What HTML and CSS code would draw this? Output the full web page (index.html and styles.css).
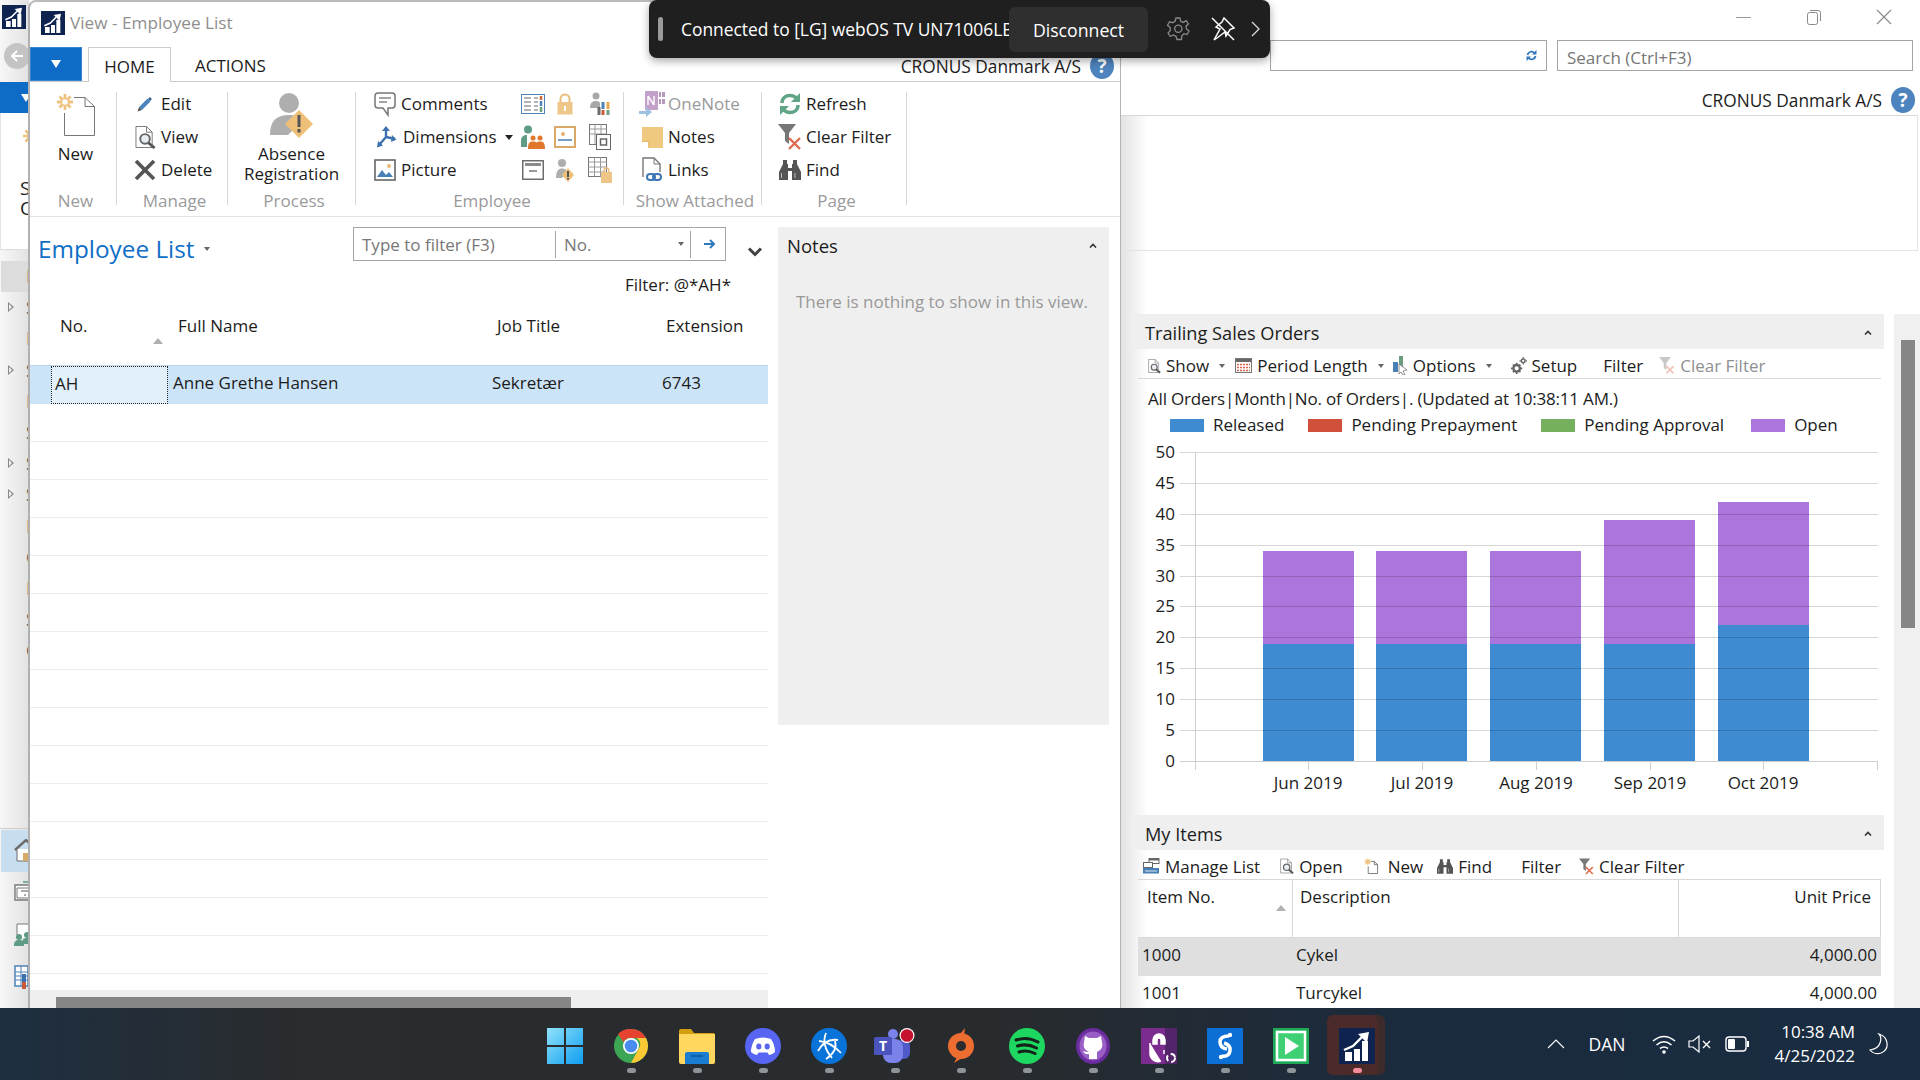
FILE: index.html
```html
<!DOCTYPE html>
<html lang="en">
<head>
    <meta charset="UTF-8">
    <title>View - Employee List</title>
    <link rel="stylesheet" href="styles.css">
</head>
<body>
<svg class="defs" width="0" height="0">
    <symbol id="i-sun" viewBox="0 0 18 18"><path d="M9 1V17M1 9H17M3.5 3.5L14.5 14.5M14.5 3.5L3.5 14.5" stroke="#eec27e" stroke-width="2.6"/><circle cx="9" cy="9" r="2.6" fill="#fff"/></symbol>
    <symbol id="i-new" viewBox="0 0 40 44"><path d="M18 4.5H29L38.5 13.500V42.500H8.500V20" fill="#fff" stroke="#777"/><path d="M29 4.500V13.500H38.500" fill="none" stroke="#777"/><path d="M9 1V17M1 9H17M3.500 3.500L14.500 14.500M14.500 3.500L3.500 14.500" stroke="#eec27e" stroke-width="2.800"/><circle cx="9" cy="9" r="2.800" fill="#fff"/></symbol>
    <symbol id="i-newsm" viewBox="0 0 16 18"><path d="M7 3.500H11L14.500 7V16.500H4.500V9" fill="#fff" stroke="#777"/><path d="M11 3.500V7H14.500" fill="none" stroke="#777"/><path d="M4 0.500V7.500M0.500 4H7.500M1.500 1.500L6.500 6.500M6.500 1.500L1.500 6.500" stroke="#eec27e" stroke-width="1.200"/></symbol>
    <symbol id="i-edit" viewBox="0 0 16 16"><path d="M3.500 12.500L12 4" stroke="#4b83bd" stroke-width="4"/><path d="M12 2L14 4" stroke="#2f5f93" stroke-width="2.500"/><path d="M0.500 15.500L2 11L5 14Z" fill="#555"/></symbol>
    <symbol id="i-view" viewBox="0 0 22 24"><path d="M1 1H12L18 7V23H1Z" fill="#fff" stroke="#777"/><path d="M12 1V7H18" fill="none" stroke="#777"/><circle cx="10.500" cy="14" r="5" fill="#e8eef4" stroke="#666" stroke-width="2"/><path d="M14 18L20.500 23.500" stroke="#555" stroke-width="3"/></symbol>
    <symbol id="i-x" viewBox="0 0 22 20"><path d="M2 1L20 19M20 1L2 19" stroke="#555" stroke-width="3.600"/></symbol>
    <symbol id="i-person-warn" viewBox="0 0 44 46"><circle cx="19" cy="10" r="10" fill="#aeaeae"/><path d="M0 42C0 28 6 22 19 22C26 22 30 24 32 28L18 42Z" fill="#aeaeae"/><path d="M29 17L43 31L29 45L15 31Z" fill="#eebf77"/><rect x="27.500" y="22" width="3" height="12" fill="#555"/><rect x="27.500" y="36" width="3" height="3.500" fill="#555"/></symbol>
    <symbol id="i-comment" viewBox="0 0 22 25"><path d="M4 1H18Q21 1 21 4V13Q21 16 18 16H14V23L9 16H4Q1 16 1 13V4Q1 1 4 1Z" fill="#fff" stroke="#777" stroke-width="1.500"/><path d="M5 6H17M5 10H13" stroke="#888" stroke-width="1.300"/></symbol>
    <symbol id="i-dims" viewBox="0 0 20 22"><path d="M9 11V2M9 11L2 19M9 11L18 13" stroke="#3c70ae" stroke-width="2.400" fill="none"/><path d="M9 0L13 5H5ZM0 21.500L1 15L6 19.500ZM19.500 13.500L15 9L14 16Z" fill="#3c70ae"/></symbol>
    <symbol id="i-picture" viewBox="0 0 22 22"><rect x="1" y="1" width="20" height="20" fill="#fff" stroke="#666" stroke-width="1.600"/><path d="M3 18L8 11L12 16L15 13L19 18Z" fill="#4a80b8"/><circle cx="15" cy="7" r="2" fill="#e8b878"/></symbol>
    <symbol id="i-book" viewBox="0 0 24 22"><rect x="0.500" y="1.500" width="23" height="19" fill="#fff" stroke="#4f81b5"/><path d="M3 5H10M3 9H10M3 13H10M3 17H10M13 5H17M13 9H17M13 13H17M13 17H17" stroke="#9a9a9a" stroke-width="1.500"/><path d="M20 3V7" stroke="#d06a3c" stroke-width="2.500"/><path d="M20 8V13" stroke="#4f81b5" stroke-width="2.500"/><path d="M20 14V19" stroke="#6aa07e" stroke-width="2.500"/></symbol>
    <symbol id="i-lock" viewBox="0 0 16 22"><path d="M3.500 10V6A4.500 4.500 0 0 1 12.500 6V10" fill="none" stroke="#e9bd7c" stroke-width="2"/><rect x="0.500" y="9" width="15" height="12.500" fill="#eec689"/><rect x="7" y="13" width="2" height="5" fill="#fff"/></symbol>
    <symbol id="i-person-chart" viewBox="0 0 22 24"><circle cx="7" cy="4" r="3.500" fill="#a8a8a8"/><path d="M1 16C1 10 4 9 7 9S11 10 11 12V16Z" fill="#a8a8a8"/><path d="M10 15V23" stroke="#6b6b6b" stroke-width="3"/><path d="M14 10V17" stroke="#4f81b5" stroke-width="3"/><path d="M14 18V23" stroke="#c85a3a" stroke-width="3"/><path d="M19 10V17" stroke="#e9a94f" stroke-width="3"/><path d="M19 18V23" stroke="#6a9f80" stroke-width="3"/></symbol>
    <symbol id="i-people" viewBox="0 0 24 24"><circle cx="7" cy="4.500" r="4" fill="#5e9c85"/><path d="M0 16C0 11 3 10 6 10L6 22H0Z" fill="#5e9c85"/><circle cx="12" cy="13" r="2.500" fill="#e0772b"/><circle cx="19" cy="13" r="2.500" fill="#e0772b"/><path d="M7 24C7 17 9 16.500 12 16.500S17 17 17 24ZM14 24C14 17 16 16.500 19 16.500S24 17 24 24Z" fill="#e0772b"/></symbol>
    <symbol id="i-card" viewBox="0 0 22 22"><rect x="1" y="1" width="20" height="20" fill="#fff" stroke="#d9a868" stroke-width="2"/><circle cx="9" cy="8" r="2" fill="#e3b26e"/><path d="M4 14H18" stroke="#4f81b5" stroke-width="1.500"/></symbol>
    <symbol id="i-table-frame" viewBox="0 0 22 26"><rect x="0.500" y="0.500" width="17" height="20" fill="#fff" stroke="#777"/><path d="M0.500 5H17.500M0.500 10H17.500M6 0.500V20M12 0.500V20" stroke="#999"/><rect x="7.500" y="10.500" width="14" height="15" fill="#fff" stroke="#666"/><rect x="11.500" y="15" width="6" height="6" fill="none" stroke="#666" stroke-width="1.500"/></symbol>
    <symbol id="i-window" viewBox="0 0 22 20"><rect x="0.750" y="0.750" width="20.500" height="18.500" fill="#fff" stroke="#6d6d6d" stroke-width="1.500"/><rect x="3" y="3" width="16" height="3" fill="#8a8a8a"/><path d="M7 11H15" stroke="#777" stroke-width="1.500"/></symbol>
    <symbol id="i-person-warn-sm" viewBox="0 0 20 24"><circle cx="7" cy="5" r="4" fill="#aeaeae"/><path d="M1 20C1 12 4 10.500 7 10.500S12 12 12 14L7 20Z" fill="#aeaeae"/><path d="M13 10L19 17L13 24L7 17Z" fill="#eebf77"/><rect x="12" y="13" width="2" height="6" fill="#555"/><rect x="12" y="20" width="2" height="1.500" fill="#555"/></symbol>
    <symbol id="i-table-lock" viewBox="0 0 25 27"><rect x="0.500" y="0.500" width="18" height="19" fill="#fff" stroke="#777"/><path d="M0.500 5H18.500M0.500 10H18.500M0.500 15H18.500M6.500 0.500V19.500M12.500 0.500V19.500" stroke="#999"/><path d="M16 16V13.500A2.500 2.500 0 0 1 21 13.500V16" fill="none" stroke="#e9bd7c" stroke-width="1.500"/><rect x="13" y="15" width="11" height="11" fill="#eec689"/></symbol>
    <symbol id="i-onenote" viewBox="0 0 26 26"><rect x="6" y="0" width="13" height="19" fill="#c3a0ca"/><path d="M20 1H22V6H20ZM23 1H26V6H23ZM20 8H22V13H20ZM23 8H26V13H23Z" fill="#b59abb"/><path d="M9 5V14M9 5L15 14M15 5V14" stroke="#fff" stroke-width="1.400"/><path d="M0 20H7V16L13 21L7 26V23H0Z" fill="#9ec1e0"/></symbol>
    <symbol id="i-notes" viewBox="0 0 21 21"><path d="M0 0H21V21H7L0 14Z" fill="#efc97f"/><path d="M0 15H6V21Z" fill="#fff"/><path d="M0 14.500H7V21" fill="none" stroke="#e7b866"/></symbol>
    <symbol id="i-links" viewBox="0 0 20 26"><path d="M1 20V1H12L18 7V15" fill="#fff" stroke="#777" stroke-width="1.400"/><path d="M12 1V7H18" fill="none" stroke="#777"/><rect x="5" y="17" width="8" height="6" rx="3" fill="none" stroke="#3f78b5" stroke-width="2"/><rect x="11" y="17" width="8" height="6" rx="3" fill="none" stroke="#3f78b5" stroke-width="2"/></symbol>
    <symbol id="i-refresh" viewBox="0 0 22 24"><path d="M3 11C3 6 7 3.500 11 3.500C14 3.500 16 4.500 17.500 6.500" fill="none" stroke="#5fa585" stroke-width="3.500"/><path d="M21 1V10H12Z" fill="#5fa585"/><path d="M19 13C19 18 15 20.500 11 20.500C8 20.500 6 19.500 4.500 17.500" fill="none" stroke="#5fa585" stroke-width="3.500"/><path d="M1 23V14H10Z" fill="#5fa585"/></symbol>
    <symbol id="i-funnel-x" viewBox="0 0 24 26"><path d="M0 0H18L11 9V20L7 17V9Z" fill="#777"/><path d="M11 14L22 25M22 14L11 25" stroke="#de6a50" stroke-width="2.400"/></symbol>
    <symbol id="i-binoc" viewBox="0 0 22 20"><path d="M4 0H8V4H9V8H13V4H14V0H18V4L22 12V20H13V11H9V20H0V12L4 4Z" fill="#555"/><path d="M2.500 13V18M16 13V18" stroke="#bbb"/></symbol>
    <symbol id="i-calendar" viewBox="0 0 17 15"><rect x="0.500" y="0.500" width="16" height="14" fill="#fff" stroke="#777"/><rect x="1" y="1" width="15" height="3" fill="#666"/><path d="M2 6.500H15M2 9.500H15M2 12.500H15" stroke="#d8644a" stroke-width="1.600" stroke-dasharray="2 1"/></symbol>
    <symbol id="i-options" viewBox="0 0 15 19"><rect x="0" y="6" width="5" height="10" fill="#4a80b8"/><rect x="6" y="0" width="4" height="13" fill="#6a9f80"/><path d="M6 8L14 14L10 15L12 19L10 19L8 16L6 18Z" fill="#fff" stroke="#777" stroke-width="0.800"/></symbol>
    <symbol id="i-gears" viewBox="0 0 17 18"><circle cx="6" cy="12" r="3.500" fill="none" stroke="#666" stroke-width="2.500"/><path d="M6 6V8M6 16V18M0 12H2M10 12H12M2 8L3.500 9.500M10 8L8.500 9.500M2 16L3.500 14.500M10 16L8.500 14.500" stroke="#666" stroke-width="1.800"/><circle cx="13" cy="4" r="2" fill="none" stroke="#666" stroke-width="1.600"/><path d="M13 0V1.500M13 6.500V8M9 4H10.500M15.500 4H17" stroke="#666" stroke-width="1.300"/></symbol>
    <symbol id="i-manage" viewBox="0 0 17 16"><rect x="6" y="0.500" width="10" height="5" fill="#fff" stroke="#666"/><rect x="6" y="0.500" width="10" height="2" fill="#666"/><rect x="0.500" y="4.500" width="9" height="5" fill="#fff" stroke="#666"/><rect x="0" y="10" width="16" height="5.500" fill="#4a80b8"/><rect x="2" y="12" width="12" height="2" fill="#fff" opacity=".4"/></symbol>

    <symbol id="a-nav" viewBox="0 0 36 36"><rect width="36" height="36" fill="#0f2350"/><path d="M5 22L14 18L23 9" fill="none" stroke="#fff" stroke-width="2.400"/><path d="M19 6L30 4L28 15Z" fill="#fff"/><path d="M6 24H13V33H6ZM15 21H21V33H15ZM23 13H29V33H23Z" fill="#fff"/></symbol>
</svg>

<div class="desktop">
    <div class="screen">
        <div class="back">
            <div class="rail">
                <svg class="rail-logo" width="24" height="24"><use href="#a-nav"/></svg>
                <div class="rail-back">
                    <svg width="14" height="14" viewBox="0 0 14 14"><path d="M7 2L2 7L7 12M2 7H13" fill="none" stroke="#fff" stroke-width="2"/></svg>
                </div>
                <div class="rail-menu"><i class="tri-white"></i></div>
                <div class="rail-box">
                    <svg class="rail-sun" width="18" height="18"><use href="#i-sun"/></svg>
                    <span class="rail-text">S</span>
                    <span class="rail-text">Q</span>
                </div>
                <div class="rail-nav">
                    <div class="nav-item nav-current"><span>F</span></div>
                    <div class="nav-item nav-open"><span>S</span></div>
                    <div class="nav-item"><span>D</span></div>
                    <div class="nav-item nav-open"><span>S</span></div>
                    <div class="nav-item"><span>E</span></div>
                    <div class="nav-item"><span>S</span></div>
                    <div class="nav-item nav-open"><span>S</span></div>
                    <div class="nav-item nav-open"><span>S</span></div>
                    <div class="nav-item"><span>I</span></div>
                    <div class="nav-item"><span>C</span></div>
                    <div class="nav-item"><span>I</span></div>
                    <div class="nav-item"><span>S</span></div>
                    <div class="nav-item"><span>C</span></div>
                </div>
                <div class="rail-areas">
                    <div class="area area-current">
                        <svg width="24" height="24" viewBox="0 0 24 24"><path d="M1 11L12 1L23 11" fill="none" stroke="#6b6b6b" stroke-width="2.400"/><path d="M3 10V22H21V10" fill="#fff" stroke="#6b6b6b"/><rect x="9" y="14" width="6" height="8" fill="#d6ab68"/></svg>
                    </div>
                    <div class="area">
                        <svg width="24" height="20" viewBox="0 0 24 20"><path d="M1 4H20V19H1Z" fill="#fff" stroke="#777" stroke-width="1.400"/><path d="M3 7H17V17H3Z" fill="none" stroke="#777"/><path d="M7 10H15M10 14H12" stroke="#555"/><path d="M9 1H14M15 1H20" stroke="#5e9c85" stroke-width="1.500"/></svg>
                    </div>
                    <div class="area">
                        <svg width="24" height="24" viewBox="0 0 24 24"><path d="M3 12V1H15L20 6V20" fill="#fff" stroke="#777"/><circle cx="5" cy="14" r="3" fill="#5e9c85"/><circle cx="13" cy="12" r="3" fill="#5e9c85"/><path d="M0 23C0 18 2 17 5 17S10 18 10 23ZM8 21C8 16 10 15 13 15S18 16 18 21Z" fill="#5e9c85"/></svg>
                    </div>
                    <div class="area">
                        <svg width="24" height="24" viewBox="0 0 24 24"><rect x="1" y="1" width="13" height="20" fill="#fff" stroke="#4f81b5" stroke-width="1.500"/><path d="M1 7H14M1 11H14M1 15H14M7 1V21" stroke="#4f81b5"/><rect x="8" y="9" width="4" height="15" fill="#3c70ae"/><rect x="14" y="8" width="6" height="8" fill="#b86a35"/><rect x="8" y="17" width="4" height="7" fill="#c85a3a"/><rect x="14" y="16" width="6" height="8" fill="#6a9f80"/></svg>
                    </div>
                </div>
            </div>

            <div class="back-main">
                <div class="winctl">
                    <svg width="16" height="16" viewBox="0 0 16 16"><path d="M0 8.500H15" stroke="#999"/></svg>
                    <svg width="16" height="16" viewBox="0 0 16 16"><rect x="1.500" y="3.500" width="10" height="12" rx="2" fill="none" stroke="#888"/><path d="M4 1.500H12.500Q14.500 1.500 14.500 3.500V12" fill="none" stroke="#888"/></svg>
                    <svg width="16" height="16" viewBox="0 0 16 16"><path d="M1 1L15 15M15 1L1 15" stroke="#888" stroke-width="1.100"/></svg>
                </div>
                <div class="addr-row">
                    <div class="addr-box">
                        <svg width="11" height="11" viewBox="0 0 11 11"><path d="M1.500 5A4 4 0 0 1 8.500 3M9.500 6A4 4 0 0 1 2.500 8" fill="none" stroke="#2f78bd" stroke-width="1.800"/><path d="M10.500 0V4.500H6ZM.5 11V6.500H5Z" fill="#2f78bd"/></svg>
                    </div>
                    <div class="search-box">Search (Ctrl+F3)</div>
                </div>
                <div class="company-row">
                    <span>CRONUS Danmark A/S</span>
                    <span class="help">?</span>
                </div>
                <div class="back-panel"></div>

                <div class="parts-wrap">
                    <div class="parts">
                        <div class="part-head">
                            <span>Trailing Sales Orders</span>
                            <svg width="8" height="5" viewBox="0 0 8 5"><path d="M1 4.500L4 1.500L7 4.500" fill="none" stroke="#333" stroke-width="1.600"/></svg>
                        </div>
                        <div class="tools tools-line">
                            <span class="tool"><svg width="13" height="16"><use href="#i-view"/></svg>Show</span>
                            <span class="caret"></span>
                            <span class="tool"><svg width="17" height="15"><use href="#i-calendar"/></svg>Period Length</span>
                            <span class="caret"></span>
                            <span class="tool tool-options"><svg width="15" height="19"><use href="#i-options"/></svg>Options</span>
                            <span class="caret"></span>
                            <span class="tool tool-setup"><svg width="16" height="17"><use href="#i-gears"/></svg>Setup</span>
                            <span class="tool tool-filter">Filter</span>
                            <span class="tool tool-off"><svg class="faded" width="16" height="17"><use href="#i-funnel-x"/></svg>Clear Filter</span>
                        </div>
                        <div class="chart-title">All Orders|Month|No. of Orders|. (Updated at 10:38:11 AM.)</div>
                        <div class="legend">
                            <span class="legend-item"><i class="sw sw-released"></i>Released</span>
                            <span class="legend-item"><i class="sw sw-prepay"></i>Pending Prepayment</span>
                            <span class="legend-item"><i class="sw sw-approval"></i>Pending Approval</span>
                            <span class="legend-item"><i class="sw sw-open"></i>Open</span>
                        </div>
                        <svg class="chart" width="749" height="362" viewBox="1135 441 749 362">
                            <g class="bar-open">
                                <rect x="1263" y="551" width="91" height="93"/>
                                <rect x="1376" y="551" width="91" height="93"/>
                                <rect x="1490" y="551" width="91" height="93"/>
                                <rect x="1604" y="520" width="91" height="124"/>
                                <rect x="1718" y="502" width="91" height="123"/>
                            </g>
                            <g class="bar-released">
                                <rect x="1263" y="644" width="91" height="117"/>
                                <rect x="1376" y="644" width="91" height="117"/>
                                <rect x="1490" y="644" width="91" height="117"/>
                                <rect x="1604" y="644" width="91" height="117"/>
                                <rect x="1718" y="625" width="91" height="136"/>
                            </g>
                            <path class="grid" d="M1180 452.500H1878M1180 483.500H1878M1180 514.500H1878M1180 545.500H1878M1180 576.500H1878M1180 606.500H1878M1180 637.500H1878M1180 668.500H1878M1180 699.500H1878M1180 730.500H1878"/>
                            <path class="axis" d="M1180 761.500H1878M1195.500 452V770M1308.500 761V770M1422.500 761V770M1536.500 761V770M1650.500 761V770M1763.500 761V770M1877.500 761V770"/>
                            <g class="y-labels">
                                <text x="1175" y="458">50</text>
                                <text x="1175" y="489">45</text>
                                <text x="1175" y="520">40</text>
                                <text x="1175" y="551">35</text>
                                <text x="1175" y="582">30</text>
                                <text x="1175" y="612">25</text>
                                <text x="1175" y="643">20</text>
                                <text x="1175" y="674">15</text>
                                <text x="1175" y="705">10</text>
                                <text x="1175" y="736">5</text>
                                <text x="1175" y="767">0</text>
                            </g>
                            <g class="x-labels">
                                <text x="1308" y="789">Jun 2019</text>
                                <text x="1422" y="789">Jul 2019</text>
                                <text x="1536" y="789">Aug 2019</text>
                                <text x="1650" y="789">Sep 2019</text>
                                <text x="1763" y="789">Oct 2019</text>
                            </g>
                        </svg>

                        <div class="part-head part-items">
                            <span>My Items</span>
                            <svg width="8" height="5" viewBox="0 0 8 5"><path d="M1 4.500L4 1.500L7 4.500" fill="none" stroke="#333" stroke-width="1.600"/></svg>
                        </div>
                        <div class="tools tools-items">
                            <span class="tool"><svg width="17" height="16"><use href="#i-manage"/></svg>Manage List</span>
                            <span class="tool"><svg width="14" height="16"><use href="#i-view"/></svg>Open</span>
                            <span class="tool tool-new"><svg width="15" height="17"><use href="#i-newsm"/></svg>New</span>
                            <span class="tool tool-find"><svg width="16" height="15"><use href="#i-binoc"/></svg>Find</span>
                            <span class="tool tool-filter2">Filter</span>
                            <span class="tool tool-clear2"><svg width="15" height="17"><use href="#i-funnel-x"/></svg>Clear Filter</span>
                        </div>
                        <div class="items-table">
                            <div class="ith ith-no"><span>Item No.</span><i class="sort-arrow"></i></div>
                            <div class="ith ith-desc">Description</div>
                            <div class="ith ith-price">Unit Price</div>
                            <div class="itd itd-no itd-sel">1000</div>
                            <div class="itd itd-desc itd-sel">Cykel</div>
                            <div class="itd itd-price itd-sel">4,000.00</div>
                            <div class="itd itd-no">1001</div>
                            <div class="itd itd-desc">Turcykel</div>
                            <div class="itd itd-price">4,000.00</div>
                        </div>
                    </div>
                    <div class="vscroll"><div class="vscroll-thumb"></div></div>
                </div>
            </div>
        </div>

        <div class="front">
            <div class="titlebar">
                <svg width="24" height="24"><use href="#a-nav"/></svg>
                <span>View - Employee List</span>
            </div>
            <div class="tabrow">
                <div class="app-menu"><i class="tri-white"></i></div>
                <div class="tab tab-on">HOME</div>
                <div class="tab">ACTIONS</div>
                <div class="tab-company">
                    <span>CRONUS Danmark A/S</span>
                    <span class="help">?</span>
                </div>
            </div>

            <div class="ribbon">
                <div class="group group-new">
                    <div class="group-body big-btn">
                        <svg width="40" height="44"><use href="#i-new"/></svg>
                        <span>New</span>
                    </div>
                    <div class="group-label">New</div>
                </div>
                <div class="group group-manage">
                    <div class="group-body stack">
                        <div class="rb"><span class="rb-ico"><svg width="16" height="16"><use href="#i-edit"/></svg></span>Edit</div>
                        <div class="rb"><span class="rb-ico"><svg width="21" height="24"><use href="#i-view"/></svg></span>View</div>
                        <div class="rb"><span class="rb-ico"><svg width="22" height="20"><use href="#i-x"/></svg></span>Delete</div>
                    </div>
                    <div class="group-label">Manage</div>
                </div>
                <div class="group group-process">
                    <div class="group-body big-btn">
                        <svg width="44" height="46"><use href="#i-person-warn"/></svg>
                        <span class="big-two">Absence<br>Registration</span>
                    </div>
                    <div class="group-label">Process</div>
                </div>
                <div class="group group-employee">
                    <div class="group-body emp">
                        <div class="stack">
                            <div class="rb"><span class="rb-ico"><svg width="22" height="25"><use href="#i-comment"/></svg></span>Comments</div>
                            <div class="rb rb-dims"><span class="rb-ico"><svg width="20" height="22"><use href="#i-dims"/></svg></span>Dimensions<i class="tri-dark"></i></div>
                            <div class="rb"><span class="rb-ico"><svg width="22" height="22"><use href="#i-picture"/></svg></span>Picture</div>
                        </div>
                        <div class="icon-grid">
                            <svg width="24" height="22"><use href="#i-book"/></svg>
                            <svg width="16" height="22"><use href="#i-lock"/></svg>
                            <svg width="22" height="24"><use href="#i-person-chart"/></svg>
                            <svg width="24" height="24"><use href="#i-people"/></svg>
                            <svg width="22" height="22"><use href="#i-card"/></svg>
                            <svg width="22" height="26"><use href="#i-table-frame"/></svg>
                            <svg width="22" height="20"><use href="#i-window"/></svg>
                            <svg width="20" height="24"><use href="#i-person-warn-sm"/></svg>
                            <svg width="25" height="27"><use href="#i-table-lock"/></svg>
                        </div>
                    </div>
                    <div class="group-label">Employee</div>
                </div>
                <div class="group group-attached">
                    <div class="group-body stack">
                        <div class="rb rb-off"><span class="rb-ico"><svg width="26" height="26"><use href="#i-onenote"/></svg></span>OneNote</div>
                        <div class="rb"><span class="rb-ico"><svg width="21" height="21"><use href="#i-notes"/></svg></span>Notes</div>
                        <div class="rb"><span class="rb-ico"><svg width="20" height="26"><use href="#i-links"/></svg></span>Links</div>
                    </div>
                    <div class="group-label">Show Attached</div>
                </div>
                <div class="group group-page">
                    <div class="group-body stack">
                        <div class="rb"><span class="rb-ico"><svg width="22" height="24"><use href="#i-refresh"/></svg></span>Refresh</div>
                        <div class="rb"><span class="rb-ico"><svg width="24" height="26"><use href="#i-funnel-x"/></svg></span>Clear Filter</div>
                        <div class="rb"><span class="rb-ico"><svg width="22" height="20"><use href="#i-binoc"/></svg></span>Find</div>
                    </div>
                    <div class="group-label">Page</div>
                </div>
            </div>

            <div class="content">
                <div class="list">
                    <div class="list-top">
                        <h1 class="list-title">Employee List<i class="tri-small"></i></h1>
                        <div class="filter-box">
                            <span class="filter-input">Type to filter (F3)</span>
                            <span class="filter-field">No.<i class="tri-small"></i></span>
                            <span class="filter-go">
                                <svg width="12" height="10" viewBox="0 0 12 10"><path d="M0 5H9M6 1L10 5L6 9" fill="none" stroke="#2f78bd" stroke-width="2"/></svg>
                            </span>
                        </div>
                        <svg class="list-chevron" width="16" height="10" viewBox="0 0 16 10"><path d="M2 1.500L8 7.500L14 1.500" fill="none" stroke="#444" stroke-width="3"/></svg>
                    </div>
                    <div class="filter-line">Filter: @*AH*</div>
                    <div class="grid-head">
                        <div class="gh gh-no"><span>No.</span><i class="sort-arrow"></i></div>
                        <div class="gh gh-name">Full Name</div>
                        <div class="gh gh-job">Job Title</div>
                        <div class="gh gh-ext">Extension</div>
                    </div>
                    <div class="grid-row row-sel">
                        <div class="gd gd-focus">AH</div>
                        <div class="gd">Anne Grethe Hansen</div>
                        <div class="gd">Sekretær</div>
                        <div class="gd">6743</div>
                    </div>
                    <div class="grid-empty"></div>
                    <div class="grid-empty"></div>
                    <div class="grid-empty"></div>
                    <div class="grid-empty"></div>
                    <div class="grid-empty"></div>
                    <div class="grid-empty"></div>
                    <div class="grid-empty"></div>
                    <div class="grid-empty"></div>
                    <div class="grid-empty"></div>
                    <div class="grid-empty"></div>
                    <div class="grid-empty"></div>
                    <div class="grid-empty"></div>
                    <div class="grid-empty"></div>
                    <div class="grid-empty"></div>
                    <div class="grid-empty"></div>
                    <div class="hscroll"><div class="hscroll-thumb"></div></div>
                </div>
                <div class="notes">
                    <div class="notes-head">
                        <span>Notes</span>
                        <svg width="8" height="5" viewBox="0 0 8 5"><path d="M1 4.500L4 1.500L7 4.500" fill="none" stroke="#333" stroke-width="1.600"/></svg>
                    </div>
                    <div class="notes-empty">There is nothing to show in this view.</div>
                </div>
            </div>
        </div>

        <div class="toast">
            <span class="toast-grip"></span>
            <span class="toast-text">Connected to [LG] webOS TV UN71006LB</span>
            <span class="toast-btn">Disconnect</span>
            <svg class="toast-gear" width="26" height="26" viewBox="0 0 26 26"><path d="M11 2H15L15.700 5.300L18.300 6.400L21.200 4.600L23.400 7.800L21 10.200L21.500 13L24 15L22 18.600L19 17.700L16.800 19.800L16.500 23.500H12L11 20.300L8.300 19L5.300 20.500L3 17L5.200 14.700V11.500L2.500 9.300L4.500 5.800L7.800 6.700L10.200 5Z" fill="none" stroke="#8a8a8a" stroke-width="1.300"/><circle cx="13.300" cy="12.800" r="3.600" fill="none" stroke="#8a8a8a" stroke-width="1.300"/></svg>
            <svg class="toast-pin" width="26" height="26" viewBox="0 0 26 26"><path d="M2 2L24 24M14 2L24 12L20 13.500L16 20L15 16L7 22L4 24L10 13L6 11L12 6Z" fill="none" stroke="#fff" stroke-width="1.500"/></svg>
            <svg class="toast-more" width="9" height="16" viewBox="0 0 9 16"><path d="M1 1L8 8L1 15" fill="none" stroke="#ddd" stroke-width="1.300"/></svg>
        </div>
    </div>

    <div class="taskbar">
        <div class="apps">
            <div class="app app-plain">
                <svg width="36" height="36" viewBox="0 0 36 36"><defs><linearGradient id="win" x1="0" y1="0" x2="1" y2="1"><stop offset="0" stop-color="#8fe2fb"/><stop offset="1" stop-color="#0f9df0"/></linearGradient></defs><path d="M0 0H17V17H0ZM19 0H36V17H19ZM0 19H17V36H0ZM19 19H36V36H19Z" fill="url(#win)"/></svg>
            </div>
            <div class="app">
                <svg width="36" height="36" viewBox="0 0 36 36"><circle cx="18" cy="18" r="17" fill="#3da655"/><path d="M18 1A17 17 0 0 1 33 10H18A8 8 0 0 0 10.500 14L5 6A17 17 0 0 1 18 1Z" fill="#e5432f"/><path d="M33 10A17 17 0 0 1 18 35L25 22A8 8 0 0 0 24 10Z" fill="#fcc934"/><circle cx="18" cy="18" r="8" fill="#fff"/><circle cx="18" cy="18" r="6.300" fill="#4a8bf0"/></svg>
                <i class="dot"></i>
            </div>
            <div class="app">
                <svg width="36" height="36" viewBox="0 0 36 36"><path d="M0 3Q0 1 2 1H12L15 5H34Q36 5 36 7V12H0Z" fill="#d39f0e"/><path d="M0 6H36V34Q36 36 34 36H2Q0 36 0 34Z" fill="#ffd75f"/><path d="M6 26Q6 24 8 24H28Q30 24 30 26V36H6Z" fill="#1a7dd1"/><path d="M12 28H24" stroke="#0c5a9e" stroke-width="1.600"/></svg>
                <i class="dot"></i>
            </div>
            <div class="app">
                <svg width="36" height="36" viewBox="0 0 36 36"><circle cx="18" cy="18" r="18" fill="#5865f2"/><path d="M10 11Q18 8 26 11Q30 17 30 24Q27 27 24 27L22.500 24.500H13.500L12 27Q9 27 6 24Q6 17 10 11Z" fill="#fff"/><ellipse cx="13.800" cy="18.500" rx="2.600" ry="3" fill="#5865f2"/><ellipse cx="22.200" cy="18.500" rx="2.600" ry="3" fill="#5865f2"/></svg>
                <i class="dot"></i>
            </div>
            <div class="app">
                <svg width="36" height="36" viewBox="0 0 36 36"><circle cx="18" cy="18" r="18" fill="#0874da"/><path d="M15 5Q10 17 21 30M27 12Q14 10 7 23M8 13Q20 14 30 25M24 13Q27 23 15 31" fill="none" stroke="#fff" stroke-width="1.800"/></svg>
                <i class="dot"></i>
            </div>
            <div class="app">
                <svg width="42" height="36" viewBox="0 0 42 36"><circle cx="19" cy="6" r="5" fill="#7b83eb"/><rect x="22" y="12" width="14" height="19" rx="6" fill="#5059c9"/><rect x="9" y="11" width="20" height="24" rx="8" fill="#7b83eb"/><rect x="0" y="9" width="18" height="18" rx="1.500" fill="#4b53bc"/><text class="teams-t" x="9" y="23">T</text><circle cx="33" cy="7.500" r="7.500" fill="#fff"/><circle cx="33" cy="7.500" r="6.300" fill="#c4122f"/></svg>
                <i class="dot"></i>
            </div>
            <div class="app">
                <svg width="26" height="36" viewBox="0 0 26 36"><path d="M13 5A13 13 0 1 1 13 31A13 13 0 1 1 13 5Z" fill="#ed6c30"/><path d="M12 6L17 0L16 7ZM14 30L6 35L9 29Z" fill="#ed6c30"/><circle cx="13" cy="18" r="5" fill="#2a2c2f"/></svg>
                <i class="dot"></i>
            </div>
            <div class="app">
                <svg width="36" height="36" viewBox="0 0 36 36"><circle cx="18" cy="18" r="18" fill="#1ed760"/><path d="M7 12Q18 8 29 14M8.500 18Q18 15 27.500 20M10 24Q18 21.500 26 25.500" fill="none" stroke="#14231a" stroke-width="3" stroke-linecap="round"/></svg>
                <i class="dot"></i>
            </div>
            <div class="app">
                <svg width="34" height="36" viewBox="0 0 34 36"><ellipse cx="17" cy="18" rx="17" ry="18" fill="#6a2c9e"/><ellipse cx="17" cy="18" rx="13.500" ry="14.500" fill="#9a5fc4"/><path d="M9 8L13 10H21L25 8L26 14Q28 21 21 24V31H13V26Q9 27 7 23Q9 24 13 24Q6 21 8 14Z" fill="#fff"/></svg>
                <i class="dot"></i>
            </div>
            <div class="app">
                <svg width="36" height="36" viewBox="0 0 36 36"><rect width="36" height="36" fill="#7a2c8f"/><rect x="24" width="12" height="36" fill="#54246a"/><path d="M12 12A6 6 0 0 1 24 12V16H20V12A2 2 0 0 0 16 12V16H12ZM9 15V26A8 8 0 0 0 20 33M23 22V26" fill="#fff" stroke="#fff" stroke-width="1.500"/><circle cx="30" cy="30" r="4" fill="none" stroke="#fff" stroke-width="2" stroke-dasharray="6 3"/></svg>
                <i class="dot"></i>
            </div>
            <div class="app">
                <svg width="36" height="36" viewBox="0 0 36 36"><rect width="36" height="36" fill="#0c6fd6"/><path d="M22 8Q13 8 13 14T20 21" fill="none" stroke="#fff" stroke-width="3.500"/><path d="M17 15Q24 17 23 23T15 28" fill="none" stroke="#fff" stroke-width="3.500"/><circle cx="23" cy="7" r="2.200" fill="#fff"/><circle cx="14" cy="29" r="2.200" fill="#fff"/></svg>
                <i class="dot"></i>
            </div>
            <div class="app">
                <svg width="36" height="36" viewBox="0 0 36 36"><rect width="36" height="36" fill="#1fa855"/><rect x="2.500" y="2.500" width="31" height="31" fill="#3ed073"/><rect x="4" y="4" width="28" height="28" fill="none" stroke="#fff" stroke-width="2.500"/><path d="M12 9L26 18L12 27Z" fill="#fff"/></svg>
                <i class="dot"></i>
            </div>
            <div class="app app-active">
                <svg width="36" height="36"><use href="#a-nav"/></svg>
                <i class="dot dot-on"></i>
            </div>
        </div>
        <div class="tray">
            <svg class="tray-chev" width="18" height="10" viewBox="0 0 18 10"><path d="M1 9L9 1L17 9" fill="none" stroke="#fff" stroke-width="1.100"/></svg>
            <span class="tray-lang">DAN</span>
            <svg class="tray-wifi" width="24" height="20" viewBox="0 0 24 20"><path d="M1 7Q12 -2 23 7M4.500 11Q12 4.500 19.500 11M8 14.500Q12 11.500 16 14.500" fill="none" stroke="#fff" stroke-width="1.600"/><circle cx="12" cy="18" r="1.800" fill="#fff"/></svg>
            <svg class="tray-vol" width="24" height="20" viewBox="0 0 24 20"><path d="M1 7H5L11 2V18L5 13H1Z" fill="none" stroke="#fff" stroke-width="1.200"/><path d="M15 7L22 14M22 7L15 14" stroke="#fff" stroke-width="1.400"/></svg>
            <svg class="tray-batt" width="24" height="16" viewBox="0 0 24 16"><rect x="1" y="1" width="20" height="14" rx="3" fill="none" stroke="#fff" stroke-width="1.400"/><rect x="3" y="3" width="7" height="10" rx="1" fill="#fff"/><rect x="22" y="5" width="2" height="6" fill="#fff"/></svg>
            <div class="clock"><span>10:38 AM</span><span>4/25/2022</span></div>
            <svg class="tray-moon" width="20" height="22" viewBox="0 0 20 22"><path d="M10 1Q17 3 18 10T12 20Q5 22 1 17Q9 16 11 10T10 1Z" fill="none" stroke="#fff" stroke-width="1.200"/></svg>
        </div>
    </div>
</div>
</body>
</html>
```

FILE: styles.css
```css
* { box-sizing: border-box; }

body {
    margin: 0;
    font-family: "Open Sans", "Noto Sans", sans-serif;
    font-size: 17px;
    color: #1c1c1c;
    background: #fff;
}

.defs { position: absolute; }
svg { display: block; flex: none; }
i { display: block; font-style: normal; }

.desktop {
    width: 1920px;
    height: 1080px;
    overflow: hidden;
    display: flex;
    flex-direction: column;
}

.screen {
    position: relative;
    height: 1008px;
    overflow: hidden;
    flex: none;
}

/* window behind */
.back {
    display: flex;
    justify-content: space-between;
    height: 1008px;
}

.rail {
    width: 29px;
    overflow: hidden;
    background: linear-gradient(90deg, #f7f7f7, #e2e2e2);
    display: flex;
    flex-direction: column;
    flex: none;
}

.rail > * { flex: none; }

.rail-logo { margin: 5px 0 0 2px; }

.rail-back {
    width: 26px;
    height: 26px;
    margin: 14px 0 0 4px;
    border-radius: 50%;
    background: #c4c4c4;
    display: flex;
    align-items: center;
    justify-content: center;
}

.rail-menu {
    height: 31px;
    margin-top: 13px;
    background: #0f6cc6;
    padding: 12px 0 0 21px;
}

.rail-box {
    height: 137px;
    background: #fff;
    border-left: 1px solid #e4e4e4;
    border-bottom: 1px solid #ddd;
    display: flex;
    flex-direction: column;
    padding: 14px 0 0 19px;
    white-space: nowrap;
}

.rail-sun { margin-left: 2px; margin-bottom: 33px; }
.rail-text { line-height: 20px; font-size: 19px; }

.rail-nav { margin-top: 11px; }

.nav-item {
    height: 31.200px;
    line-height: 30px;
    padding-left: 25px;
    font-size: 18px;
    color: #555;
    margin-left: 1px;
    position: relative;
}

.nav-current { background: #dcdcdc; }

.nav-open::before {
    content: "";
    position: absolute;
    left: 7px;
    top: 10px;
    border-left: 6px solid #888;
    border-top: 5px solid transparent;
    border-bottom: 5px solid transparent;
}

.nav-open::after {
    content: "";
    position: absolute;
    left: 8px;
    top: 12px;
    border-left: 3px solid #f2f2f2;
    border-top: 3px solid transparent;
    border-bottom: 3px solid transparent;
}

.rail-areas {
    margin-top: 162px;
    border-top: 1px solid #ccc;
    padding-top: 1px;
}

.area {
    height: 42px;
    padding: 9px 0 0 13px;
    margin-left: 1px;
}

.area-current { background: #c6deef; }

.back-main {
    width: 800px;
    flex: none;
    display: flex;
    flex-direction: column;
}

.back-main > * { flex: none; }

.winctl {
    height: 40px;
    display: flex;
    align-items: flex-start;
    padding: 9px 28px 0 0;
    justify-content: flex-end;
    gap: 54px;
}

.addr-row {
    height: 31px;
    display: flex;
    justify-content: flex-end;
    gap: 10px;
    padding-right: 7px;
}

.addr-box {
    width: 277px;
    border: 1px solid #a5a5a5;
    display: flex;
    align-items: center;
    justify-content: flex-end;
    padding-right: 9px;
}

.search-box {
    width: 356px;
    border: 1px solid #a5a5a5;
    padding-left: 9px;
    color: #777;
    line-height: 33px;
}

.company-row {
    height: 44px;
    display: flex;
    align-items: center;
    justify-content: flex-end;
    gap: 9px;
    padding: 14px 5px 0 0;
    white-space: nowrap;
    font-size: 17.300px;
}

.help {
    width: 24px;
    height: 26px;
    border-radius: 50%;
    background: #4d84bd;
    color: #fff;
    font-weight: 700;
    font-size: 19px;
    line-height: 26px;
    text-align: center;
}

.back-panel {
    height: 136px;
    border-top: 1px solid #d8d8d8;
    border-bottom: 1px solid #e4e4e4;
    border-right: 1px solid #e4e4e4;
    margin-right: 2px;
    background: linear-gradient(90deg, #e2e2e2, #fff 28px);
}

.parts-wrap {
    display: flex;
    padding: 63px 0 0 15px;
    gap: 10px;
    background: linear-gradient(90deg, #e2e2e2, #fff 28px);
}

.parts { width: 749px; flex: none; }

.vscroll {
    flex: 1;
    background: #f0f0f0;
    padding: 26px 5px 0 7px;
}

.vscroll-thumb { height: 288px; background: #868686; }

.part-head {
    height: 35px;
    background: #efefef;
    display: flex;
    align-items: center;
    justify-content: space-between;
    padding: 2px 12px 0 10px;
    font-size: 18.200px;
}

.tools {
    display: flex;
    align-items: center;
    gap: 8px;
    margin-left: 3px;
    width: 743px;
    white-space: nowrap;
}

.tools-line {
    height: 30px;
    padding: 4px 0 0 10px;
    border-bottom: 1px solid #d8d8d8;
}

.tool { display: inline-flex; align-items: center; gap: 5px; }
.tool-options { margin-left: -1px; }
.tool-setup { margin-left: 9px; }
.tool-filter { margin-left: 18px; }
.tool-off { margin-left: 8px; color: #8f8f8f; }
.faded { opacity: .4; }

.caret {
    border-top: 4px solid #666;
    border-left: 3px solid transparent;
    border-right: 3px solid transparent;
    margin: 0 2px;
}

.chart-title {
    margin: 9px 0 0 13px;
    line-height: 22px;
    white-space: nowrap;
    letter-spacing: -.19px;
}

.legend {
    display: flex;
    margin: 4px 0 0 35px;
    gap: 24px;
    line-height: 22px;
    white-space: nowrap;
}

.legend-item { display: inline-flex; align-items: center; gap: 9px; }
.legend-item:last-child { margin-left: 3px; }
.sw { width: 34px; height: 13px; }
.sw-released { background: #3f8bd2; }
.sw-prepay { background: #d0503b; }
.sw-approval { background: #74b05e; }
.sw-open { background: #ab75dc; }

.chart { margin-top: 5px; }
.chart text { font-family: "Open Sans", "Noto Sans", sans-serif; font-size: 17px; fill: #1c1c1c; }
.bar-open { fill: #ab75dc; }
.bar-released { fill: #3f8bd2; }
.grid { stroke: rgba(0, 0, 0, .16); fill: none; }
.axis { stroke: #cfcfcf; fill: none; }
.y-labels { text-anchor: end; }
.x-labels { text-anchor: middle; }

.part-items { margin-top: 12px; }

.tools-items { height: 29px; padding: 3px 0 0 5px; gap: 20px; }
.tools-items .tool-new { margin-left: 1px; gap: 9px; }
.tools-items .tool-find { margin-left: -6px; }
.tools-items .tool-filter2 { margin-left: 9px; }
.tools-items .tool-clear2 { margin-left: -2px; }

.items-table {
    margin-left: 3px;
    width: 743px;
    display: grid;
    grid-template-columns: 155px 386px 202px;
}

.ith {
    height: 59px;
    border-top: 1px solid #d8d8d8;
    border-bottom: 1px solid #d8d8d8;
    border-right: 1px solid #d8d8d8;
    padding-top: 5px;
    line-height: 24px;
}

.ith-no { padding-left: 9px; display: flex; }
.ith-desc { padding-left: 7px; }
.ith-price { padding-right: 9px; text-align: right; }

.sort-arrow {
    width: 0;
    height: 0;
    border-left: 5px solid transparent;
    border-right: 5px solid transparent;
    border-bottom: 6px solid #b0b0b0;
    margin: 20px 6px 0 auto;
}

.itd { height: 38px; line-height: 33px; }
.itd-no { padding-left: 4px; }
.itd-desc { padding-left: 3px; }
.itd-price { padding-right: 4px; text-align: right; }
.itd-sel { background: #dfdfdf; }

/* employee list window */
.front {
    position: absolute;
    left: 28px;
    top: 0;
    width: 1093px;
    height: 1008px;
    background: #fff;
    border-left: 2px solid #b0b0b0;
    border-top: 2px solid #bbb;
    border-right: 1px solid #b5b5b5;
    border-top-left-radius: 8px;
    display: flex;
    flex-direction: column;
}

.titlebar {
    height: 45px;
    flex: none;
    display: flex;
    align-items: center;
    gap: 5px;
    padding: 0 0 4px 11px;
    color: #8f8f8f;
    font-size: 17.200px;
}

.tabrow {
    height: 35px;
    display: flex;
    border-bottom: 1px solid #ccc;
    flex: none;
}

.app-menu {
    width: 52px;
    height: 34px;
    background: #0f6cc6;
    border: 1px solid #3a86d2;
    display: flex;
    align-items: center;
    justify-content: center;
}

.tri-white {
    width: 0;
    border-top: 8px solid #fff;
    border-left: 5px solid transparent;
    border-right: 5px solid transparent;
}

.tab {
    height: 34px;
    line-height: 38px;
    padding: 0 24px;
    white-space: nowrap;
}

.tab-on {
    margin-left: 6px;
    width: 83px;
    padding: 0;
    text-align: center;
    height: 35px;
    background: #fff;
    border: 1px solid #ccc;
    border-bottom: 0;
}

.tab-company {
    margin-left: auto;
    display: flex;
    align-items: center;
    gap: 9px;
    padding: 4px 6px 0 0;
    white-space: nowrap;
    font-size: 17.300px;
}

.ribbon {
    height: 135px;
    flex: none;
    display: flex;
    padding-top: 10px;
    border-bottom: 1px solid #e2e2e2;
}

.group {
    height: 113px;
    border-right: 1px solid #d8d8d8;
    display: flex;
    flex-direction: column;
    flex: none;
}

.group-new { width: 87px; }
.group-manage { width: 111px; }
.group-process { width: 128px; }
.group-employee { width: 268px; }
.group-attached { width: 138px; }
.group-page { width: 145px; }

.group-body { height: 98px; flex: none; }

.group-label {
    padding-left: 5px;
    text-align: center;
    color: #9a9a9a;
    line-height: 22px;
    white-space: nowrap;
}

.big-btn {
    display: flex;
    flex-direction: column;
    align-items: center;
    padding-top: 1px;
    text-align: center;
    line-height: 20px;
}

.group-new .big-btn { padding-left: 5px; }
.big-btn span { margin-top: 7px; }
.big-btn .big-two { margin-top: 5px; }

.stack { display: flex; flex-direction: column; gap: 9px; }

.group-manage .stack { padding-left: 15px; }
.group-attached .stack { padding-left: 15px; }
.group-page .stack { padding-left: 15px; }

.rb {
    height: 24px;
    line-height: 22px;
    display: flex;
    align-items: center;
    gap: 3px;
    white-space: nowrap;
}

.rb-dims { padding-left: 2px; }

.rb-ico {
    width: 26px;
    height: 24px;
    display: flex;
    align-items: center;
    justify-content: center;
}

.rb-off { color: #9a9a9a; }

.tri-dark {
    border-top: 5px solid #222;
    border-left: 4px solid transparent;
    border-right: 4px solid transparent;
    margin-left: 6px;
}

.emp {
    display: flex;
    padding-left: 16px;
}

.emp .stack { width: 143px; flex: none; }

.icon-grid {
    display: grid;
    grid-template-columns: 36px 28px 42px;
    grid-template-rows: 24px 24px 24px;
    gap: 9px 0;
    align-items: center;
    justify-items: center;
}

.content { flex: 1; display: flex; min-height: 0; }

.list { width: 738px; flex: none; display: flex; flex-direction: column; overflow: hidden; }

.list-top {
    height: 44px;
    padding-top: 10px;
    display: flex;
    align-items: flex-start;
    flex: none;
}

.list-title {
    margin: 0 0 0 8px;
    width: 315px;
    font-size: 24.300px;
    font-weight: 400;
    line-height: 44px;
    color: #0f6fc6;
    display: flex;
    align-items: center;
    white-space: nowrap;
}

.tri-small {
    border-top: 4px solid #666;
    border-left: 3px solid transparent;
    border-right: 3px solid transparent;
    margin-left: 10px;
}

.filter-box {
    width: 373px;
    height: 34px;
    border: 1px solid #a5a5a5;
    display: flex;
    align-items: center;
    white-space: nowrap;
}

.filter-input { width: 201px; padding-left: 8px; color: #777; }

.filter-field {
    width: 136px;
    height: 27px;
    line-height: 25px;
    padding: 0 6px 0 8px;
    border-left: 1px solid #a5a5a5;
    border-right: 1px solid #a5a5a5;
    color: #777;
    display: flex;
    align-items: center;
    justify-content: space-between;
}

.filter-go { flex: 1; display: flex; justify-content: center; padding-left: 3px; }

.list-chevron { margin: 20px 0 0 21px; }

.filter-line {
    height: 48px;
    line-height: 48px;
    text-align: right;
    padding-right: 37px;
    flex: none;
}

.grid-head {
    height: 56px;
    display: grid;
    grid-template-columns: 117px 319px 170px 111px;
    padding-left: 21px;
    flex: none;
}

.gh { padding-top: 5px; line-height: 24px; white-space: nowrap; }
.gh-no { padding-left: 9px; display: flex; }
.gh-no .sort-arrow { margin: 24px 5px 0 auto; }
.gh-name { padding-left: 10px; }
.gh-job { padding-left: 10px; }
.gh-ext { padding-left: 9px; }

.grid-row {
    height: 39px;
    flex: none;
    display: grid;
    grid-template-columns: 117px 319px 170px 111px;
    padding-left: 21px;
    background: #cce4f7;
    border-top: 1px solid #bcd7ec;
}

.gd { line-height: 34px; padding-left: 5px; white-space: nowrap; }

.gd-focus {
    background: #e1f0fa;
    border: 1px dotted #222;
    padding-left: 3px;
}

.grid-empty {
    height: 38px;
    flex: none;
    border-bottom: 1px solid #ececec;
}

.hscroll {
    margin-top: auto;
    height: 18px;
    flex: none;
    background: #efefef;
    padding: 7px 0 0 26px;
}

.hscroll-thumb { width: 515px; height: 11px; background: #868686; }

.notes {
    width: 331px;
    height: 498px;
    margin: 10px 0 0 10px;
    background: #efefef;
    flex: none;
}

.notes-head {
    height: 36px;
    padding: 0 12px 0 9px;
    font-size: 18.500px;
    display: flex;
    align-items: center;
    justify-content: space-between;
}

.notes-empty {
    margin-top: 27px;
    padding-left: 18px;
    color: #999;
    line-height: 24px;
    white-space: nowrap;
}

/* cast bar */
.toast {
    position: absolute;
    left: 649px;
    top: 0;
    width: 621px;
    height: 58px;
    background: #1f1f1f;
    border-radius: 8px;
    box-shadow: 0 3px 8px rgba(0, 0, 0, .35);
    color: #fff;
    display: flex;
    align-items: center;
}

.toast-grip {
    width: 5px;
    height: 24px;
    border-radius: 3px;
    background: #9a9a9a;
    margin-left: 9px;
    flex: none;
}

.toast-text {
    width: 328px;
    margin-left: 18px;
    overflow: hidden;
    white-space: nowrap;
    flex: none;
    line-height: 62px;
    font-size: 17.400px;
}

.toast-btn {
    width: 139px;
    height: 45px;
    line-height: 46px;
    background: #2f2f2f;
    border-radius: 6px;
    text-align: center;
    flex: none;
    font-size: 17.700px;
}

.toast-gear { margin-left: 17px; }
.toast-pin { margin-left: 19px; }
.toast-more { margin-left: 15px; }

/* taskbar */
.taskbar {
    height: 72px;
    flex: none;
    display: flex;
    background: linear-gradient(90deg, #1e2f40 0, #2a2c2e 300px, #282b2e 1000px, #1b2b3d 1400px, #192c41 1920px);
    color: #fff;
    padding-left: 532px;
}

.apps { display: flex; }

.app {
    position: relative;
    width: 66px;
    height: 72px;
    padding-top: 20px;
    display: flex;
    flex-direction: column;
    align-items: center;
}

.dot {
    width: 9px;
    height: 5px;
    border-radius: 3px;
    background: #8f9499;
    margin-top: 4px;
}

.app-active::before {
    content: "";
    position: absolute;
    left: 3px;
    top: 7px;
    width: 51px;
    height: 60px;
    border-radius: 6px;
    background: #4b2a2a;
    box-shadow: 7px 0 0 #3d2a2b;
}

.app-active svg, .app-active .dot { position: relative; }
.dot-on { background: #f58c9c; }

.teams-t { font-family: "Open Sans", sans-serif; font-size: 14px; font-weight: 700; fill: #fff; text-anchor: middle; }

.tray {
    margin-left: auto;
    display: flex;
    align-items: center;
    padding-right: 31px;
}

.tray-lang { margin-left: 24px; font-size: 17.500px; }
.tray-wifi { margin-left: 27px; }
.tray-vol { margin-left: 12px; }
.tray-batt { margin-left: 13px; }
.tray-moon { margin-left: 14px; }

.clock {
    margin-left: 25px;
    display: flex;
    flex-direction: column;
    align-items: flex-end;
    line-height: 24px;
}
```
